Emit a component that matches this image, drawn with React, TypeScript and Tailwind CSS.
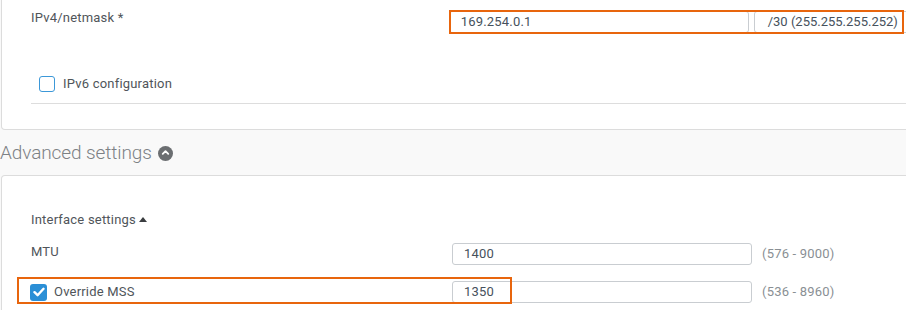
import { ChevronUp } from "lucide-react"

function TextBox({ value, className = "" }: { value: string; className?: string }) {
  return (
    <div
      className={`h-[22px] border border-[#c9cdd1] rounded-[3px] bg-white flex items-center pl-[11px] text-[13px] text-[#46515c] tracking-[0.2px] ${className}`}
    >
      {value}
    </div>
  )
}

function FieldRow({ label, value, range, checked }: { label: string; value: string; range: string; checked?: boolean }) {
  return (
    <div className="flex items-center h-[22px]">
      <div className="w-[421px] flex items-center">
        {checked ? (
          <>
            <span className="ml-[-1px] w-[17px] h-[17px] rounded-[3px] bg-[#2b8fd6] flex items-center justify-center">
              <svg width="12" height="10" viewBox="0 0 12 10">
                <path d="M1.5 5.2 L4.6 8.2 L10.5 1.8" fill="none" stroke="white" strokeWidth="2.4" strokeLinecap="round" strokeLinejoin="round" />
              </svg>
            </span>
            <span className="ml-[7px] text-[13px] text-[#50555a] tracking-[0.2px]">{label}</span>
          </>
        ) : (
          <span className="text-[13px] text-[#50555a] tracking-[0.2px] mt-[-4px]">{label}</span>
        )}
      </div>
      <TextBox value={value} className="w-[300px]" />
      <span className="ml-[10px] text-[13px] text-[#8a8f94] tracking-[0.2px]">{range}</span>
    </div>
  )
}

export default function App() {
  return (
    <div
      className="w-[906px] h-[310px] overflow-hidden bg-[#f9f9f9] relative"
      style={{ fontFamily: "Roboto, 'Noto Sans', sans-serif" }}
    >
      {/* network card */}
      <div className="ml-[1px] mr-[-10px] h-[130px] bg-white border-l border-r border-b border-[#dcdcdc] rounded-bl-[4px] pl-[29px]">
        <div className="flex pt-[11px] h-[34px]">
          <span className="w-[421px] text-[13px] text-[#50555a] leading-[12px] tracking-[0.2px] pt-[1px]">IPv4/netmask *</span>
          <div className="relative flex w-[470px] h-[22px]">
            <TextBox value="169.254.0.1" className="w-[300px] pl-[10px]" />
            <TextBox value="/30 (255.255.255.252)" className="ml-[5px] flex-1 pl-[13px] tracking-normal" />
            <div className="absolute left-0 top-[-1px] w-[455px] h-[24px] border-2 border-[#e8650d]"></div>
          </div>
        </div>
        <div className="flex items-center mt-[42px] pl-[8px] h-[16px]">
          <span className="w-[16px] h-[16px] rounded-[3px] border-[1.5px] border-[#3c98d8] bg-white"></span>
          <span className="ml-[8px] text-[13px] text-[#50555a] tracking-[0.2px]">IPv6 configuration</span>
        </div>
        <div className="mt-[11px] border-t border-[#dddddd]"></div>
      </div>

      {/* advanced heading */}
      <div className="flex items-center h-[45px] pt-[1px]">
        <span className="text-[19px] font-light text-[#7d8185] tracking-[-0.1px]">Advanced settings</span>
        <span className="ml-[6px] w-[15px] h-[15px] rounded-full bg-[#6b6e71] flex items-center justify-center">
          <ChevronUp size={11} strokeWidth={4} color="white" className="mt-[-1px]" />
        </span>
      </div>

      {/* advanced card */}
      <div className="ml-[1px] mr-[-10px] h-[200px] bg-white border-l border-r border-t border-[#dcdcdc] rounded-tl-[4px] pl-[29px]">
        <div className="flex items-center mt-[37px] h-[14px] text-[13px] text-[#50555a] tracking-[0.2px]">
          Interface settings
          <svg width="10" height="7" viewBox="0 0 10 7" className="ml-[2px] mb-[1px]">
            <path d="M5 1 L9 6 L1 6 Z" fill="#3a3d40" />
          </svg>
        </div>
        <div className="mt-[16px]">
          <FieldRow label="MTU" value="1400" range="(576 - 9000)" />
        </div>
        <div className="mt-[16px]">
          <FieldRow label="Override MSS" value="1350" range="(536 - 8960)" checked />
        </div>
      </div>

      <div className="absolute left-[17px] top-[277px] w-[495px] h-[27px] border-2 border-[#e8650d]"></div>
    </div>
  )
}
